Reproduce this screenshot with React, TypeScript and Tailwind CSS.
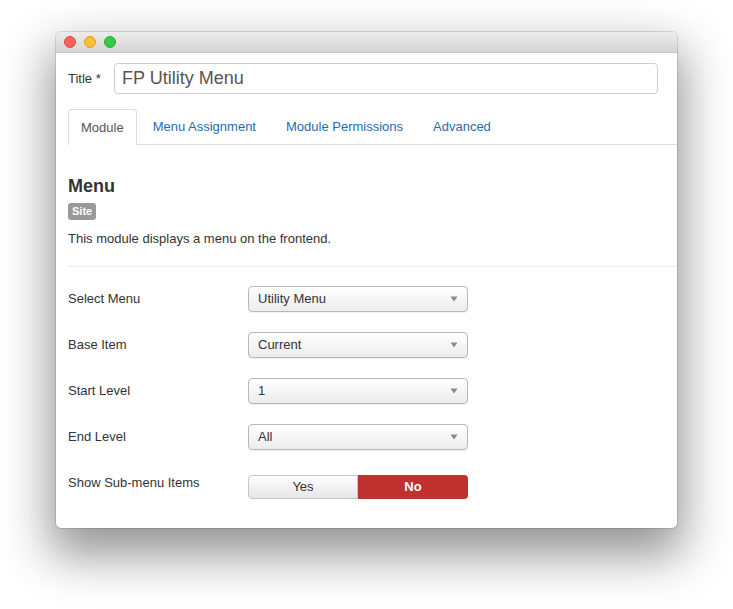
const font = { fontFamily: '"Liberation Sans", Arial, sans-serif' };

function Caret() {
  return (
    <svg width="8" height="6" viewBox="0 0 8 6" className="shrink-0">
      <path d="M0.5 0.5 L7.5 0.5 L4 5.5 Z" fill="#8a8a8a" />
    </svg>
  );
}

function SelectBox({ value }: { value: string }) {
  return (
    <div className="flex h-[26px] w-[220px] items-center justify-between rounded-[4px] border border-[#b8b8b8] bg-gradient-to-b from-white to-[#ececec] pl-[9px] pr-[9px] text-[13px] text-[#333] shadow-[0_1px_1px_rgba(0,0,0,0.06)]">
      <span>{value}</span>
      <Caret />
    </div>
  );
}

const fields = [
  { label: 'Select Menu', value: 'Utility Menu' },
  { label: 'Base Item', value: 'Current' },
  { label: 'Start Level', value: '1' },
  { label: 'End Level', value: 'All' },
];

const tabs = ['Menu Assignment', 'Module Permissions', 'Advanced'];

export default function App() {
  return (
    <div className="min-h-[609px] w-[733px] bg-white pl-[56px] pt-[32px]" style={font}>
      <div className="flex h-[496px] w-[621px] flex-col overflow-hidden rounded-[5px] bg-white shadow-[0_22px_48px_6px_rgba(0,0,0,0.42),0_0_0_1px_rgba(0,0,0,0.12)]">
        <div className="flex h-[21px] shrink-0 items-center gap-[8px] border-b border-[#c8c8c8] bg-gradient-to-b from-[#ececec] to-[#d6d6d6] pl-[8px]">
          <span className="h-[12px] w-[12px] rounded-full border border-[#e2463f] bg-[#fc605c]" />
          <span className="h-[12px] w-[12px] rounded-full border border-[#e1a116] bg-[#fdbc40]" />
          <span className="h-[12px] w-[12px] rounded-full border border-[#2dac2f] bg-[#34c84a]" />
        </div>

        <div className="flex flex-col pl-[12px] pt-[10px]">
          <div className="flex items-center pr-[19px]">
            <span className="w-[46px] text-[13px] text-[#333]">Title *</span>
            <div className="flex h-[31px] flex-1 items-center rounded-[4px] border border-[#cccccc] pl-[7px] text-[18px] text-[#555]">
              FP Utility Menu
            </div>
          </div>

          <div className="mt-[15px] flex border-b border-[#dddddd]">
            <div className="-mb-px flex h-[36px] items-center rounded-t-[4px] border border-b-0 border-[#dddddd] bg-white px-[12px] pt-[1px] text-[13px] text-[#555]">
              Module
            </div>
            {tabs.map((t) => (
              <div key={t} className="ml-[2px] flex h-[35px] items-center px-[14px] pt-[1px] text-[13px] text-[#1f6db0]">
                {t}
              </div>
            ))}
          </div>

          <h3 className="mt-[31px] text-[18px] font-bold leading-[20px] text-[#333]">Menu</h3>
          <div className="mt-[7px] flex">
            <span className="flex h-[17px] items-center rounded-[3px] bg-[#999999] px-[4px] text-[11px] font-bold text-white">
              Site
            </span>
          </div>
          <p className="mt-[10px] text-[13px] leading-[18px] text-[#333]">This module displays a menu on the frontend.</p>

          <div className="mt-[18px] border-t border-[#eeeeee]" />

          <div className="flex flex-col pt-[19px]">
            {fields.map((f) => (
              <div key={f.label} className="mb-[20px] flex items-start">
                <span className="w-[180px] pt-[4px] text-[13px] leading-[18px] text-[#333]">{f.label}</span>
                <SelectBox value={f.value} />
              </div>
            ))}
            <div className="flex items-start">
              <span className="w-[180px] pt-[4px] text-[13px] leading-[18px] text-[#333]">Show Sub-menu Items</span>
              <div className="mt-[5px] flex h-[24px] w-[220px]">
                <div className="flex h-full w-[110px] items-center justify-center rounded-l-[4px] border border-[#c4c4c4] bg-gradient-to-b from-white to-[#e6e6e6] text-[13px] text-[#333]">
                  Yes
                </div>
                <div className="flex h-full w-[110px] items-center justify-center rounded-r-[4px] bg-[#c0302f] text-[13px] font-bold text-white">
                  No
                </div>
              </div>
            </div>
          </div>
        </div>
      </div>
    </div>
  );
}
